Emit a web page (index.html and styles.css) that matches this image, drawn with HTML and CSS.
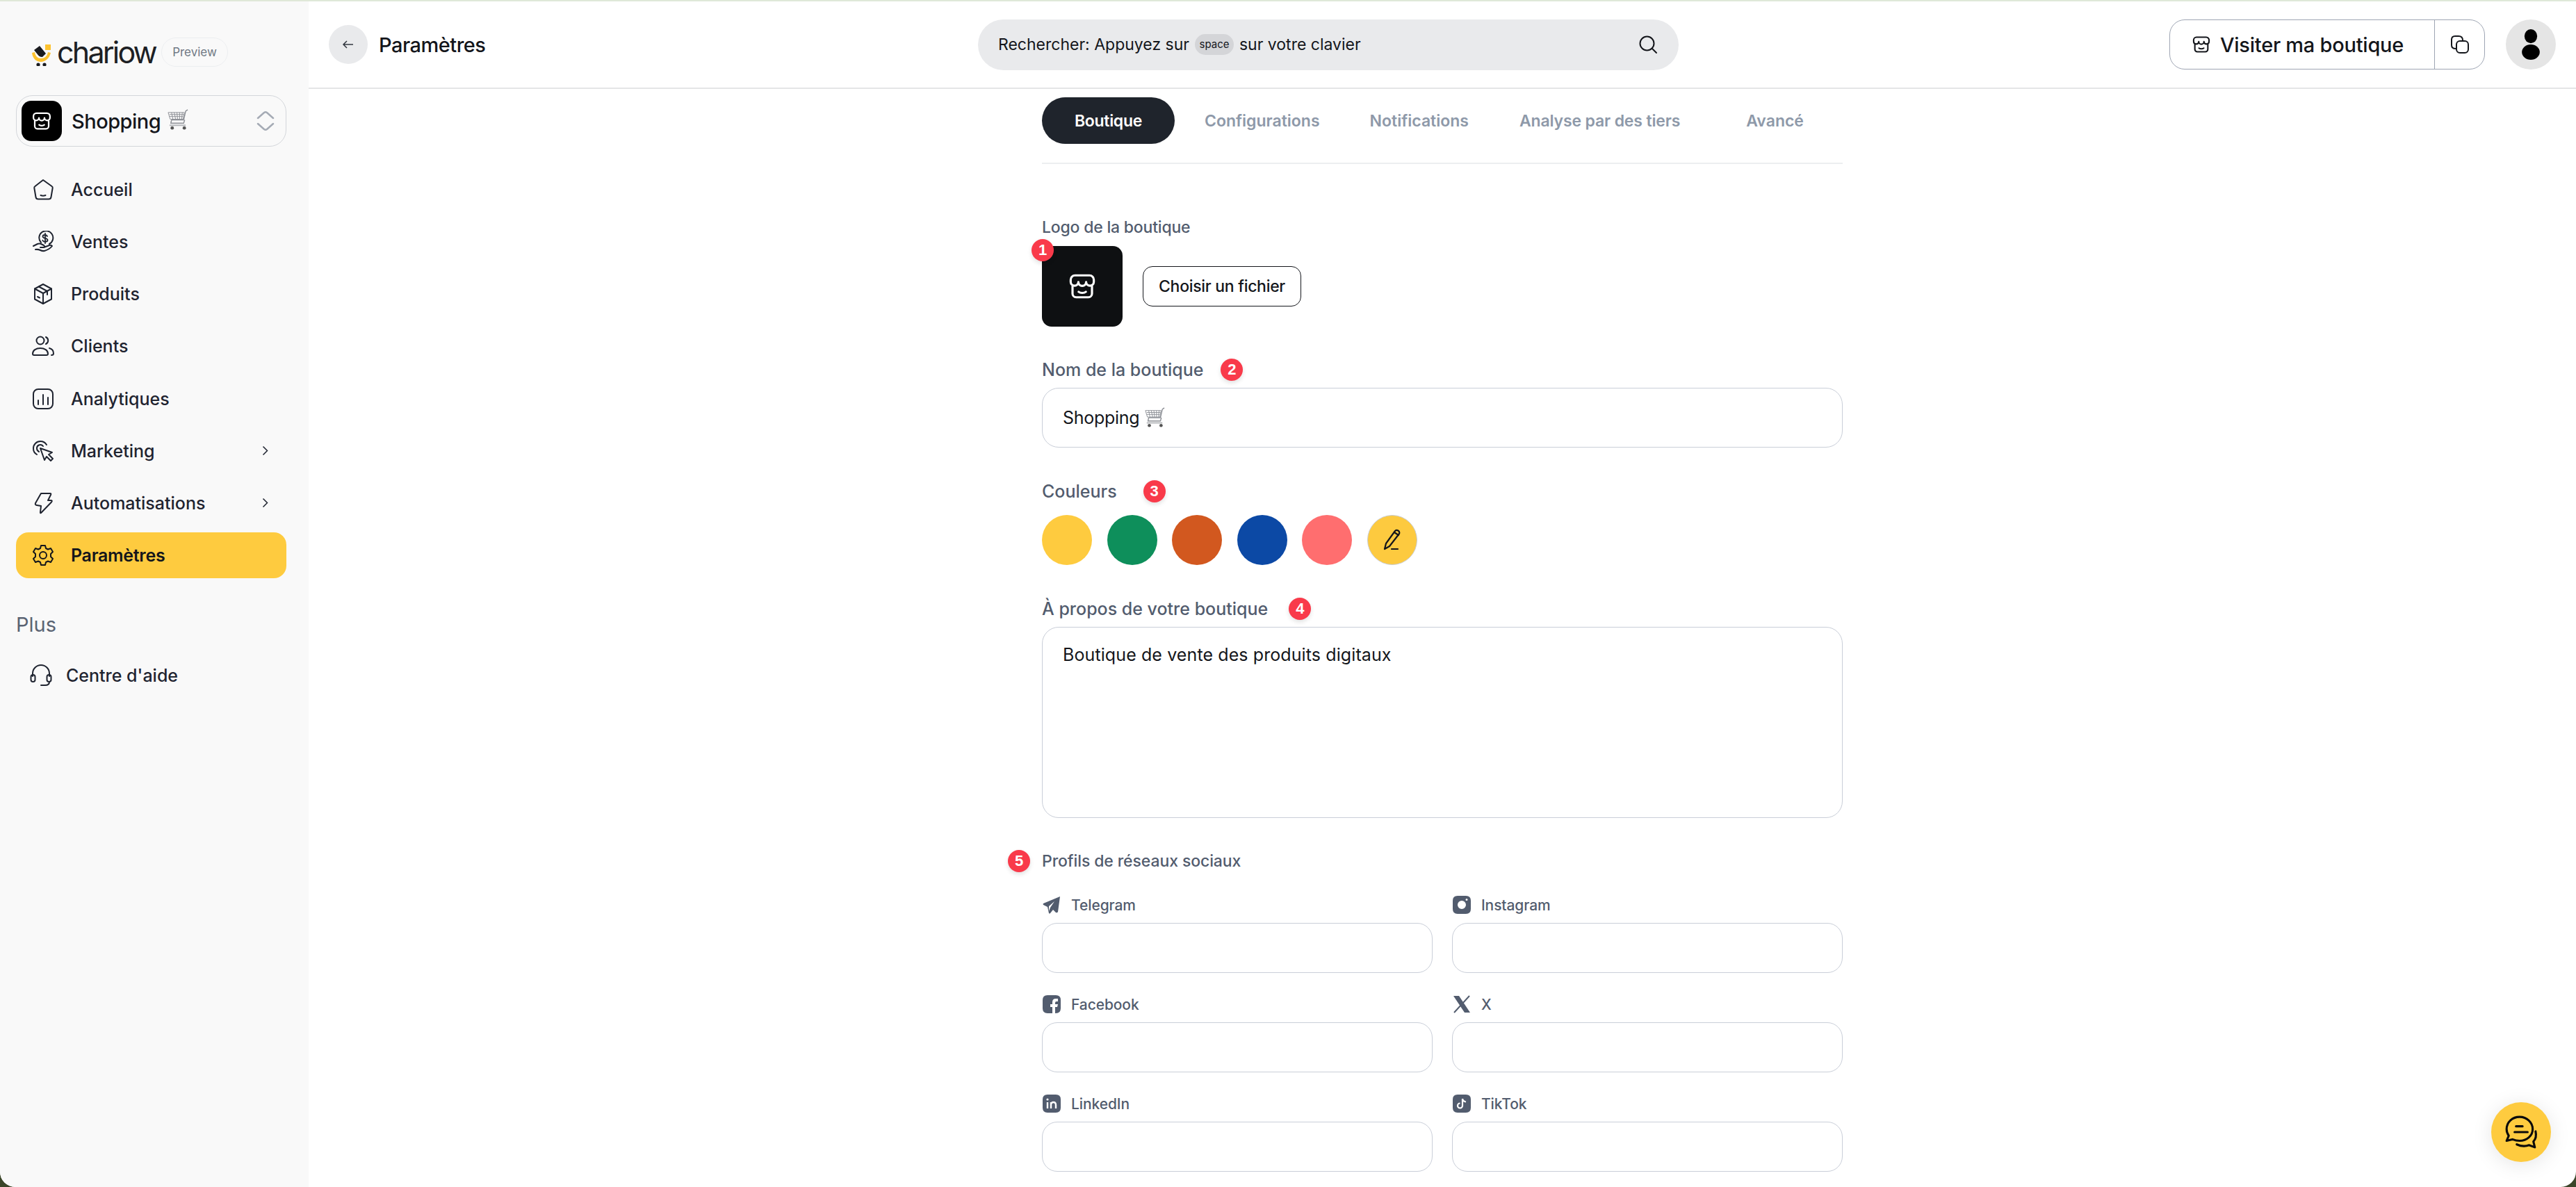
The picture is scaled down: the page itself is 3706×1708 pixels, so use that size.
FILE: index.html
```html
<!DOCTYPE html>
<html lang="fr">
<head>
    <meta charset="utf-8" />
    <title>Paramètres</title>
    <link rel="stylesheet" href="styles.css">
</head>
<body>
    <svg class="defs" width="0" height="0">
        <symbol id="store" viewBox="0 0 24 24" fill="none" stroke="currentColor" stroke-width="1.800" stroke-linecap="round" stroke-linejoin="round">
            <path d="M2.500 8.500V6.500A3.500 3.500 0 0 1 6 3h12a3.500 3.500 0 0 1 3.500 3.500v2a3.170 3.170 0 0 1-6.330 0 3.170 3.170 0 0 1-6.340 0 3.170 3.170 0 0 1-6.330 0z" />
            <path d="M4 12v6a3 3 0 0 0 3 3h10a3 3 0 0 0 3-3v-6" />
            <path d="M9 16.500c1.500 1.200 4.500 1.200 6 0" />
        </symbol>
        <symbol id="cart" viewBox="0 0 32 32" fill="none" stroke="#8d9096" stroke-width="1">
            <path d="M31 1l-3 2-3 13H7" stroke-width="1.500" />
            <path d="M2 5h24l-2 10H5zM4 8h21M4 11h20M7 5l2 10M11 5l2 10M15 5l1 10M19 5v10M23 5l-1 10" />
            <path d="M7 16l-1 5h19l1.500-5" stroke-width="1.500" />
            <path d="M4 24h24" stroke="#b5b7bb" stroke-width="2" />
            <circle cx="8" cy="28" r="2.500" fill="#555" stroke="none" />
            <circle cx="26" cy="28" r="2.500" fill="#555" stroke="none" />
        </symbol>
    </svg>

    <div class="window">
        <aside class="sidebar">
            <div class="brand">
                <svg class="brand-mark" viewBox="0 0 32 32">
                    <path d="M2 13c1 9 7 13 13 13s12-5 14-13l-4-1c-1 6-5 9-10 9S7 18 6 12z" fill="#fdc22f" />
                    <rect x="21" y="1" width="8" height="8" fill="#fdc22f" />
                    <path d="M5 9l8-6 9 11-5 5c-4 0-6-2-8-5z" fill="#1b1c20" />
                    <circle cx="11" cy="30" r="2.600" fill="#1b1c20" />
                    <circle cx="20" cy="30" r="2.600" fill="#1b1c20" />
                </svg>
                <span class="brand-name">chariow</span>
                <span class="preview">Preview</span>
            </div>

            <div class="switcher">
                <span class="switcher-logo"><svg class="icon-store"><use href="#store" /></svg></span>
                <span class="switcher-name">Shopping</span>
                <svg class="cart-big"><use href="#cart" /></svg>
                <svg class="updown" viewBox="0 0 26 30" fill="none" stroke="#a5abb5" stroke-width="2.500" stroke-linecap="round" stroke-linejoin="round">
                    <path d="M2 11l9-8q2-1.500 4 0l9 8" />
                    <path d="M2 19l9 8q2 1.500 4 0l9-8" />
                </svg>
            </div>

            <nav class="nav">
                <a class="nav-item">
                    <svg class="nav-icon" viewBox="0 0 32 32"><path d="M16 2l12.500 9q1.500 1 1.200 2.500l-2.200 13q-.5 3-3.500 3h-15q-3 0-3.500-3l-2.200-13q-.3-1.500 1.200-2.500z" /><path d="M12.500 24q3.500 1.500 7 0" /></svg>
                    <span>Accueil</span>
                </a>
                <a class="nav-item">
                    <svg class="nav-icon" viewBox="0 0 32 32"><path d="M13 17a10 10 0 1 1 12 2" /><path d="M22 8q-1-2-3.500-2-3 0-3 2.300c0 3.500 7 1.700 7 5.200q0 2.300-3.500 2.300-2.700 0-3.700-2M19 4v14" stroke-width="1.800" /><path d="M2 22l6-3q3-1 6 .5l3 1.500q2 1.500 0 3h-5M17 24l8-3q3-.5 4 1-4 5-11 7-3 .5-6-1-3-1.500-7-1" /></svg>
                    <span>Ventes</span>
                </a>
                <a class="nav-item">
                    <svg class="nav-icon" viewBox="0 0 32 32"><path d="M16 2l12 6.500v15L16 30 4 23.500v-15z" /><path d="M4 8.500L16 15l12-6.500M16 15v15M10 5.500L22 12v5" /><path d="M8 20l3 1.500" /></svg>
                    <span>Produits</span>
                </a>
                <a class="nav-item">
                    <svg class="nav-icon" viewBox="0 0 32 32"><circle cx="12" cy="8" r="5.500" /><path d="M20 3a5.500 5.500 0 0 1 0 10M3 29q-2 0-2-2c0-5 5-8 11-8s11 3 11 8q0 2-2 2zM25 19c4 1 6 4 6 7.500q0 2.500-3 2.500" /></svg>
                    <span>Clients</span>
                </a>
                <a class="nav-item">
                    <svg class="nav-icon" viewBox="0 0 32 32"><rect x="2" y="2" width="28" height="28" rx="7" /><path d="M9 18v6M16 10v14M23 14v10" /></svg>
                    <span>Analytiques</span>
                </a>
                <a class="nav-item">
                    <svg class="nav-icon" viewBox="0 0 32 32"><path d="M7 21a10 10 0 0 1-5-9A10 10 0 0 1 12 2q6 0 9 5" /><path d="M10 17q-3-1.500-3-5a5 5 0 0 1 9-3" /><path d="M12 12l17 6-5 3 6 6-3 3-6-6-3 5z" /></svg>
                    <span>Marketing</span>
                    <svg class="nav-chevron" viewBox="0 0 12 20"><path d="M2 2l8 8-8 8" /></svg>
                </a>
                <a class="nav-item">
                    <svg class="nav-icon" viewBox="0 0 32 32"><path d="M13 2h13q2 0 1 2l-4 8h4q3 0 1 2.500L13 30q-1 1-1-1l1-9-6-1q-3-.5-2-3z" /></svg>
                    <span>Automatisations</span>
                    <svg class="nav-chevron" viewBox="0 0 12 20"><path d="M2 2l8 8-8 8" /></svg>
                </a>
                <a class="nav-item active">
                    <svg class="nav-icon" viewBox="0 0 32 32"><path d="M13 2h6l1 4 3 1.500 4-1.500 3 5-3 3v4l3 3-3 5-4-1.500-3 1.500-1 4h-6l-1-4-3-1.500-4 1.500-3-5 3-3v-4l-3-3 3-5 4 1.500 3-1.500z" /><circle cx="16" cy="16" r="5" /></svg>
                    <span>Paramètres</span>
                </a>
            </nav>

            <div class="nav-title">Plus</div>
            <a class="nav-item help">
                <svg class="nav-icon" viewBox="0 0 32 32"><path d="M4 17v-4a12 12 0 0 1 24 0v4" /><rect x="1.500" y="15" width="6" height="10" rx="3" /><rect x="24.500" y="15" width="6" height="10" rx="3" /><path d="M28 25q0 5-6 5h-6" /></svg>
                <span>Centre d'aide</span>
            </a>
        </aside>

        <main class="main">
            <header class="topbar">
                <div class="page-title">
                    <span class="back"><svg viewBox="0 0 20 20"><path d="M17 10H3M8 5l-5 5 5 5" /></svg></span>
                    <span class="page-name">Paramètres</span>
                </div>
                <div class="search">
                    <span>Rechercher: Appuyez sur</span>
                    <span class="kbd">space</span>
                    <span>sur votre clavier</span>
                    <svg class="search-icon" viewBox="0 0 28 28"><circle cx="12.500" cy="12.500" r="10" /><path d="M20 20l6 6" /></svg>
                </div>
                <div class="top-actions">
                    <div class="visit">
                        <a class="visit-link"><svg class="icon-visit"><use href="#store" /></svg>Visiter ma boutique</a>
                        <a class="visit-copy">
                            <svg viewBox="0 0 28 28"><path d="M8 20q-6 0-6-5V7q0-5 5-5h5q6 0 6 6" /><rect x="9" y="9" width="17" height="17" rx="5" /></svg>
                        </a>
                    </div>
                    <span class="avatar">
                        <svg viewBox="0 0 28 48"><ellipse cx="14" cy="11" rx="10" ry="11" /><ellipse cx="14" cy="36" rx="14" ry="12" /></svg>
                    </span>
                </div>
            </header>

            <div class="content">
                <div class="form">
                    <div class="tabs">
                        <a class="tab active">Boutique</a>
                        <a class="tab tab-config">Configurations</a>
                        <a class="tab tab-notif">Notifications</a>
                        <a class="tab tab-analyse">Analyse par des tiers</a>
                        <a class="tab tab-avance">Avancé</a>
                    </div>

                    <section class="field logo-field">
                        <div class="label label-small">Logo de la boutique</div>
                        <div class="logo-row">
                            <div class="logo-box">
                                <span class="badge badge-logo">1</span>
                                <svg class="icon-logo"><use href="#store" /></svg>
                            </div>
                            <button class="file-btn">Choisir un fichier</button>
                        </div>
                    </section>

                    <section class="field name-field">
                        <div class="label">Nom de la boutique <span class="badge badge-inline">2</span></div>
                        <div class="input input-name">Shopping <svg class="cart-small"><use href="#cart" /></svg></div>
                    </section>

                    <section class="field colors-field">
                        <div class="label">Couleurs <span class="badge badge-colors">3</span></div>
                        <div class="swatches">
                            <span class="swatch yellow"></span>
                            <span class="swatch green"></span>
                            <span class="swatch orange"></span>
                            <span class="swatch blue"></span>
                            <span class="swatch pink"></span>
                            <span class="swatch custom">
                                <svg viewBox="0 0 28 32"><path d="M3 29l2-8L18 3q2-2 4.500-.5T24 7L10 25z" /><path d="M17 5l6 4M13 29h9" /></svg>
                            </span>
                        </div>
                    </section>

                    <section class="field about-field">
                        <div class="label">À propos de votre boutique <span class="badge badge-about">4</span></div>
                        <textarea class="input textarea">Boutique de vente des produits digitaux</textarea>
                    </section>

                    <section class="field social-field">
                        <div class="label label-small label-social"><span class="badge badge-social">5</span>Profils de réseaux sociaux</div>
                        <div class="social-grid">
                            <div class="social">
                                <div class="social-label">
                                    <svg viewBox="0 0 26 26"><path d="M25 1L1 11q-1 1 0 2l6 3 2 9q1 1 2 0l4-5 4 4q2 1 3-1zM9 22V15l8-7-6 9z" fill-rule="evenodd" /></svg>
                                    Telegram
                                </div>
                                <input class="input social-input" type="text">
                            </div>
                            <div class="social">
                                <div class="social-label">
                                    <svg viewBox="0 0 26 26"><path d="M7 0h12q7 0 7 7v12q0 7-7 7H7q-7 0-7-7V7q0-7 7-7zm6 7a6 6 0 1 0 0 12 6 6 0 0 0 0-12zm7-3a1.500 1.500 0 1 0 0 3 1.500 1.500 0 0 0 0-3z" fill-rule="evenodd" /></svg>
                                    Instagram
                                </div>
                                <input class="input social-input" type="text">
                            </div>
                            <div class="social">
                                <div class="social-label">
                                    <svg viewBox="0 0 26 26"><path d="M7 0h12q7 0 7 7v12q0 7-7 7h-1v-9h3l1-4h-4v-2q0-2 2-2h2V5h-3q-5 0-5 5v3h-3v4h3v9H7q-7 0-7-7V7q0-7 7-7z" /></svg>
                                    Facebook
                                </div>
                                <input class="input social-input" type="text">
                            </div>
                            <div class="social">
                                <div class="social-label">
                                    <svg viewBox="0 0 26 26"><path d="M1 1h8l16 24h-8z" /><path d="M24 1L2 25" fill="none" stroke="#525c6e" stroke-width="2" /></svg>
                                    X
                                </div>
                                <input class="input social-input" type="text">
                            </div>
                            <div class="social">
                                <div class="social-label">
                                    <svg viewBox="0 0 26 26"><path d="M7 0h12q7 0 7 7v12q0 7-7 7H7q-7 0-7-7V7q0-7 7-7z" /><path d="M7 11v9M12 20v-9M12 15q0-4 3.500-4t3.500 4v5" fill="none" stroke="#fff" stroke-width="2.400" /><circle cx="7" cy="7" r="1.600" fill="#fff" /></svg>
                                    LinkedIn
                                </div>
                                <input class="input social-input" type="text">
                            </div>
                            <div class="social">
                                <div class="social-label">
                                    <svg viewBox="0 0 26 26"><path d="M7 0h12q7 0 7 7v12q0 7-7 7H7q-7 0-7-7V7q0-7 7-7z" /><path d="M14 6v10a3.500 3.500 0 1 1-3.500-3.500M14 6q1 4 5 4.500" fill="none" stroke="#fff" stroke-width="2.200" /></svg>
                                    TikTok
                                </div>
                                <input class="input social-input" type="text">
                            </div>
                        </div>
                    </section>
                </div>
            </div>
        </main>

        <a class="chat">
            <svg viewBox="0 0 48 48"><path d="M22 3C12 3 4 10 4 20q0 5 3 9l-3 7 8-2q5 2 10 2c10 0 18-7 18-16S32 3 22 3z" /><path d="M17 16h9M15 24h18" /><path d="M44 23q2 9-3 14l2 8-8-3q-8 3-17-1" /></svg>
        </a>
    </div>
</body>
</html>
```

FILE: styles.css
```css
* {
    box-sizing: border-box;
}

html, body {
    margin: 0;
    height: 100%;
    overflow: hidden;
    background: #3b4529;
}

body {
    font-family: "Inter", "Liberation Sans", sans-serif;
    color: #14161b;
}

.defs {
    position: absolute;
}

.window {
    position: relative;
    display: flex;
    width: 3706px;
    height: 1708px;
    border-top: 2px solid #dfe8d8;
    border-radius: 0 0 22px 22px;
    background: #fff;
    overflow: hidden;
}

a {
    color: inherit;
    text-decoration: none;
}

/* sidebar */
.sidebar {
    flex: none;
    width: 444px;
    padding: 0 32px 0 23px;
    background: #f9f9f9;
}

.brand {
    display: flex;
    align-items: center;
    height: 90px;
    margin-top: 28px;
    padding-left: 21px;
    margin-bottom: 17px;
}

.brand-mark {
    width: 32px;
    height: 32px;
    margin-right: 6px;
    margin-top: 8px;
}

.brand-name {
    font-size: 43px;
    font-weight: 400;
    letter-spacing: -2.8px;
    color: #1d1f24;
    width: 150px;
}

.preview {
    display: inline-flex;
    align-items: center;
    justify-content: center;
    width: 96px;
    height: 42px;
    border: 1px solid #eceef0;
    border-radius: 21px;
    font-size: 17px;
    color: #717985;
}

.switcher {
    display: flex;
    align-items: center;
    height: 74px;
    padding: 0 16px 0 7px;
    border: 1px solid #d3d6da;
    border-radius: 24px;
}

.switcher-logo {
    display: flex;
    align-items: center;
    justify-content: center;
    width: 58px;
    height: 58px;
    border-radius: 14px;
    background: #000;
    color: #fff;
}

.icon-store {
    width: 30px;
    height: 30px;
}

.switcher-name {
    margin-left: 14px;
    font-size: 29px;
    font-weight: 500;
    letter-spacing: -.5px;
}

.cart-big {
    width: 31px;
    height: 31px;
    margin-left: 9px;
    margin-top: -4px;
}

.updown {
    width: 26px;
    height: 30px;
    margin-left: auto;
}

.nav {
    display: flex;
    flex-direction: column;
    gap: 9.140px;
    margin-top: 29px;
}

.nav-item {
    display: flex;
    align-items: center;
    height: 66px;
    padding: 0 23px;
    border-radius: 18px;
    font-size: 25px;
    font-weight: 500;
    letter-spacing: 0;
    color: #1f2430;
}

.nav-icon {
    flex: none;
    width: 32px;
    height: 32px;
    margin-right: 24px;
    fill: none;
    stroke: currentColor;
    stroke-width: 2;
    stroke-linecap: round;
    stroke-linejoin: round;
}

.nav-chevron {
    width: 9px;
    height: 15px;
    margin-left: auto;
    margin-right: 3px;
    fill: none;
    stroke: currentColor;
    stroke-width: 2;
}

.nav-item.active {
    background: #fecb3f;
    color: #14161b;
    font-weight: 600;
    letter-spacing: -.3px;
}

.nav-title {
    margin-top: 47px;
    font-size: 29px;
    line-height: 40px;
    color: #5b6473;
}

.nav-item.help {
    margin-top: 20px;
    padding-left: 20px;
}

.help .nav-icon {
    margin-right: 20px;
}

/* top bar */
.main {
    flex: 1;
    min-width: 0;
    display: flex;
    flex-direction: column;
}

.topbar {
    position: relative;
    flex: none;
    display: flex;
    align-items: center;
    height: 126px;
    padding: 0 29px;
    border-bottom: 2px solid #e4e5e7;
}

.page-title {
    flex: none;
    display: flex;
    align-items: center;
    width: 934px;
}

.back {
    display: flex;
    align-items: center;
    justify-content: center;
    width: 56px;
    height: 56px;
    border-radius: 50%;
    background: #e9eaec;
}

.back svg {
    width: 20px;
    height: 20px;
    fill: none;
    stroke: #333840;
    stroke-width: 1.500;
}

.page-name {
    margin-left: 16px;
    font-size: 29px;
    font-weight: 500;
    letter-spacing: -.5px;
}

.search {
    flex: none;
    display: flex;
    align-items: center;
    gap: 8px;
    width: 1008px;
    height: 73px;
    padding: 0 30px 0 29px;
    border-radius: 37px;
    background: #e9eaec;
    font-size: 23px;
    letter-spacing: 0;
}

.kbd {
    width: 56px;
    height: 30px;
    border-radius: 15px;
    background: #d4d5d8;
    font-size: 15px;
    line-height: 30px;
    text-align: center;
}

.search-icon {
    width: 28px;
    height: 28px;
    margin-left: auto;
    fill: none;
    stroke: #14161b;
    stroke-width: 2;
    stroke-linecap: round;
}

.top-actions {
    display: flex;
    align-items: center;
    gap: 30px;
    margin-left: auto;
}

.visit {
    display: flex;
    height: 72px;
    border: 1px solid #9ea5b3;
    border-radius: 22px;
}

.visit-link {
    display: flex;
    align-items: center;
    width: 381px;
    padding-left: 31px;
    font-size: 29px;
    font-weight: 500;
    letter-spacing: -.25px;
    border-right: 1px solid #9ea5b3;
}

.icon-visit {
    width: 28px;
    height: 28px;
    margin-right: 13px;
}

.visit-copy {
    display: flex;
    align-items: center;
    justify-content: center;
    width: 71px;
}

.visit-copy svg {
    width: 28px;
    height: 28px;
    fill: none;
    stroke: #14161b;
    stroke-width: 2;
}

.avatar {
    display: flex;
    align-items: center;
    justify-content: center;
    width: 72px;
    height: 72px;
    border-radius: 50%;
    background: #e5e5e5;
}

.avatar svg {
    width: 26px;
    height: 44px;
}

/* form */
.content {
    flex: 1;
    min-height: 0;
    overflow: hidden;
}

.form {
    width: 1152px;
    margin: 0 auto;
}

.tabs {
    display: flex;
    align-items: center;
    height: 108px;
    padding: 12px 0 27px;
    border-bottom: 2px solid #eceef0;
    font-size: 23px;
    font-weight: 600;
    color: #8e99a9;
    letter-spacing: 0;
}

.tab {
    display: flex;
    align-items: center;
    justify-content: center;
    height: 67px;
    border-radius: 34px;
}

.tab.active {
    width: 191px;
    background: #1f242c;
    color: #fff;
    letter-spacing: -.3px;
}

.tab-config {
    margin-left: 43px;
}

.tab-notif {
    margin-left: 72px;
}

.tab-analyse {
    margin-left: 73px;
    letter-spacing: -.15px;
}

.tab-avance {
    margin-left: 95px;
}

.field {
    position: relative;
}

.label {
    display: flex;
    align-items: center;
    height: 32px;
    font-size: 25px;
    font-weight: 500;
    letter-spacing: 0;
    color: #525c6e;
}

.label-small {
    font-size: 23px;
    letter-spacing: -.2px;
}

.label-social {
    letter-spacing: -.1px;
}

.badge {
    display: inline-flex;
    align-items: center;
    justify-content: center;
    width: 32px;
    height: 32px;
    border-radius: 50%;
    background: #f93a4a;
    box-shadow: 0 3px 6px rgba(0, 0, 0, .12);
    color: #fff;
    font-family: "Liberation Sans", sans-serif;
    font-size: 22px;
    font-weight: 700;
    letter-spacing: 0;
}

.badge-inline {
    margin-left: 25px;
}

.badge-colors {
    margin-left: 38px;
}

.badge-about {
    margin-left: 30px;
}

.logo-field {
    margin-top: 75px;
}

.logo-row {
    display: flex;
    align-items: center;
    gap: 29px;
    margin-top: 11px;
}

.logo-box {
    position: relative;
    display: flex;
    align-items: center;
    justify-content: center;
    width: 116px;
    height: 116px;
    border-radius: 14px;
    background: #0e1012;
    color: #fff;
}

.icon-logo {
    width: 42px;
    height: 42px;
}

.badge-logo {
    position: absolute;
    left: -15px;
    top: -10px;
}

.file-btn {
    width: 228px;
    height: 58px;
    padding: 0;
    border: 1px solid #14161b;
    border-radius: 14px;
    background: #fff;
    font-family: inherit;
    font-size: 23px;
    font-weight: 500;
    letter-spacing: -.3px;
    color: #14161b;
}

.input {
    display: flex;
    align-items: center;
    width: 100%;
    border: 1px solid #c9ced8;
    border-radius: 24px;
    background: #fff;
    font-family: inherit;
    font-size: 25px;
    font-weight: 400;
    letter-spacing: .1px;
    color: #14161b;
    outline: none;
}

.name-field {
    margin-top: 46px;
}

.input-name {
    height: 86px;
    margin-top: 10px;
    padding-left: 29px;
    letter-spacing: -.3px;
}

.cart-small {
    width: 30px;
    height: 30px;
    margin-left: 7px;
}

.colors-field {
    margin-top: 47px;
}

.swatches {
    display: flex;
    gap: 21.600px;
    margin-top: 18px;
}

.swatch {
    display: flex;
    align-items: center;
    justify-content: center;
    width: 72px;
    height: 72px;
    border-radius: 50%;
}

.yellow {
    background: #fecb3f;
}

.green {
    background: #0e8f5b;
}

.orange {
    background: #d2581f;
}

.blue {
    background: #0c49a5;
}

.pink {
    background: #ff6e6f;
}

.custom {
    background: #fdca3f;
    border: 1px solid #c8ccd2;
}

.custom svg {
    width: 28px;
    height: 32px;
    fill: none;
    stroke: #14161b;
    stroke-width: 2.200;
    stroke-linecap: round;
    stroke-linejoin: round;
}

.about-field {
    margin-top: 47px;
}

.textarea {
    display: block;
    height: 275px;
    margin-top: 10px;
    padding: 24px 29px;
    resize: none;
}

.social-field {
    margin-top: 46px;
}

.badge-social {
    position: absolute;
    left: -49px;
    top: 0;
}

.social-grid {
    display: grid;
    grid-template-columns: 562px 562px;
    column-gap: 28px;
    row-gap: 32px;
    margin-top: 34px;
}

.social-label {
    display: flex;
    align-items: center;
    height: 26px;
    gap: 15px;
    margin-bottom: 13px;
    font-size: 21px;
    font-weight: 500;
    letter-spacing: -.1px;
    color: #525c6e;
}

.social-label svg {
    flex: none;
    width: 26px;
    height: 26px;
    margin-left: 1px;
    fill: #525c6e;
}

.social-input {
    height: 72px;
    border-radius: 22px;
}

/* floating chat */
.chat {
    position: absolute;
    right: 36px;
    bottom: 36px;
    display: flex;
    align-items: center;
    justify-content: center;
    width: 86px;
    height: 86px;
    border-radius: 50%;
    background: #fecb3f;
    box-shadow: 0 4px 30px rgba(0, 0, 0, .1);
}

.chat svg {
    width: 50px;
    height: 50px;
    fill: none;
    stroke: #0b0b0b;
    stroke-width: 3;
    stroke-linecap: round;
    stroke-linejoin: round;
}
```
